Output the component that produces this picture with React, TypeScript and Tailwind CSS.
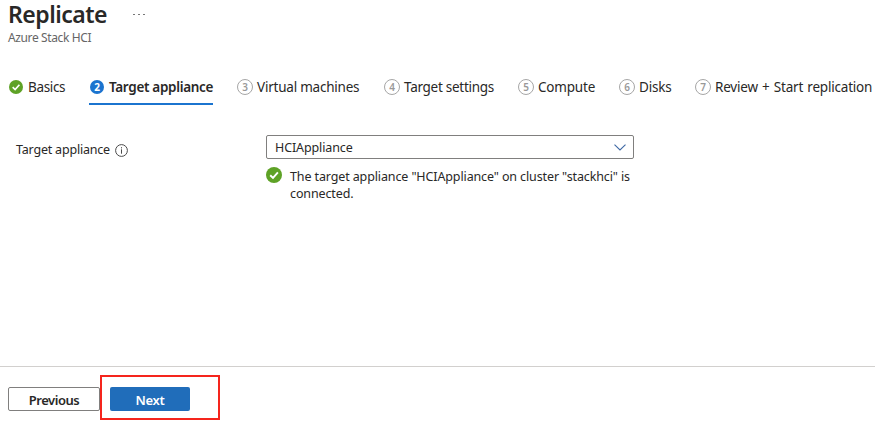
import clsx from "clsx";

type Step = {
  number: number;
  label: string;
  width: string;
  spacing?: string;
  status: "done" | "current" | "pending";
};

const steps: Step[] = [
  { number: 1, label: "Basics", width: "w-[56px]", spacing: "tracking-[-0.35px]", status: "done" },
  { number: 2, label: "Target appliance", width: "w-[124px]", status: "current" },
  { number: 3, label: "Virtual machines", width: "w-[123px]", spacing: "tracking-[-0.22px]", status: "pending" },
  { number: 4, label: "Target settings", width: "w-[110px]", spacing: "tracking-[-0.28px]", status: "pending" },
  { number: 5, label: "Compute", width: "w-[77px]", spacing: "tracking-[-0.2px]", status: "pending" },
  { number: 6, label: "Disks", width: "w-[52px]", spacing: "tracking-[-0.2px]", status: "pending" },
  {
    number: 7,
    label: "Review + Start replication",
    width: "w-[178px]",
    spacing: "tracking-[-0.2px] [word-spacing:0.9px]",
    status: "pending",
  },
];

function CheckIcon({ className }: { className?: string }) {
  return (
    <svg viewBox="0 0 16 16" className={clsx("shrink-0", className)} fill="none">
      <circle cx="8" cy="8" r="8" fill="#5ea226" />
      <path d="M4.2 8.2 7 10.9l4.9-5.5" stroke="#fff" strokeWidth="1.9" />
    </svg>
  );
}

function InfoIcon() {
  return (
    <svg viewBox="0 0 13 13" className="h-[13px] w-[13px] shrink-0" fill="none">
      <circle cx="6.5" cy="6.5" r="5.9" stroke="#4a4a4a" />
      <path d="M6.5 5.3v4.4" stroke="#4a4a4a" />
      <path d="M6.5 3.2v1.2" stroke="#4a4a4a" />
    </svg>
  );
}

function StepIcon({ step }: { step: Step }) {
  if (step.status === "done") {
    return <CheckIcon className="mr-[5px] h-[14px] w-[14px]" />;
  }
  if (step.status === "current") {
    return (
      <span className="mr-[5px] ml-px flex h-[14px] w-[14px] shrink-0 items-center justify-center rounded-full bg-[#1b74cf] text-[10px] leading-none font-bold text-white">
        {step.number}
      </span>
    );
  }
  return (
    <span className="mr-[4px] flex h-4 w-4 shrink-0 items-center justify-center rounded-full border border-[#a6a6a6] text-[10px] leading-none font-semibold text-[#999]">
      {step.number}
    </span>
  );
}

function Steps() {
  return (
    <nav className="mt-[24px] ml-[9px] flex gap-[24px]">
      {steps.map((step) => (
        <div
          key={step.number}
          className={clsx(
            "flex h-[36px] shrink-0 items-center border-b-2 pt-[2px] whitespace-nowrap",
            step.width,
            step.status === "current"
              ? "border-[#1b74cf] text-[13.5px] font-semibold tracking-[-0.32px]"
              : "border-transparent text-[13.5px]",
            step.spacing,
          )}
        >
          <StepIcon step={step} />
          <span>{step.label}</span>
        </div>
      ))}
    </nav>
  );
}

function App() {
  return (
    <div className="flex h-[422px] w-[875px] flex-col bg-white font-['Noto_Sans',sans-serif] text-[#292827]">
      <header className="h-[45px] shrink-0 pl-[8px]">
        <div className="flex h-[28px] items-center">
          <h1 className="w-[125px] text-[23px] leading-[28px] font-semibold tracking-[-0.5px]">
            Replicate
          </h1>
          <div className="flex gap-[3px]">
            <span className="h-px w-[2px] bg-[#777]" />
            <span className="h-px w-[2px] bg-[#777]" />
            <span className="h-px w-[2px] bg-[#777]" />
          </div>
        </div>
        <p className="pt-[2px] text-[12px] leading-[16px] tracking-[-0.38px] text-[#666]">
          Azure Stack HCI
        </p>
      </header>

      <Steps />

      <main className="flex grow pt-[30px] pl-[16px]">
        <div className="flex h-[30px] w-[250px] items-center gap-[5px] text-[12.5px] tracking-[-0.2px]">
          <span>Target appliance</span>
          <InfoIcon />
        </div>
        <div className="w-[368px]">
          <button
            type="button"
            className="flex h-[24px] w-full items-center justify-between rounded-[2px] border border-[#807f7e] pr-[7px] pl-[8px] text-[12.5px] tracking-[-0.12px]"
          >
            <span className="pt-[2px]">HCIAppliance</span>
            <svg viewBox="0 0 12 7" className="h-[7px] w-[12px]" fill="none">
              <path d="M.5.6 6 6 11.500.6" stroke="#3f69a5" strokeWidth="1.1" />
            </svg>
          </button>
          <div className="mt-[8px] flex">
            <CheckIcon className="mr-[8px] h-4 w-4" />
            <p className="pt-px text-[12.5px] leading-[17px] tracking-[-0.12px] whitespace-nowrap">
              The target appliance "HCIAppliance" on cluster "stackhci" is
              <br />
              connected.
            </p>
          </div>
        </div>
      </main>

      <footer className="relative flex h-[56px] shrink-0 gap-[10px] border-t border-[#d2d0ce] pt-[20px] pl-[8px] text-[13px] font-semibold">
        <button
          type="button"
          className="h-[24px] w-[92px] rounded-[2px] border border-[#807f7e] pt-[2px] leading-[20px] tracking-[-0.45px]"
        >
          Previous
        </button>
        <button
          type="button"
          className="h-[24px] w-[80px] rounded-[2px] bg-[#206dba] pt-[2px] leading-[22px] tracking-[-0.3px] text-white"
        >
          Next
        </button>
        {/* highlight around the next step */}
        <div className="absolute top-[8px] left-[100px] h-[45px] w-[120px] border-2 border-[#f5251d]" />
      </footer>
    </div>
  );
}

export default App;
